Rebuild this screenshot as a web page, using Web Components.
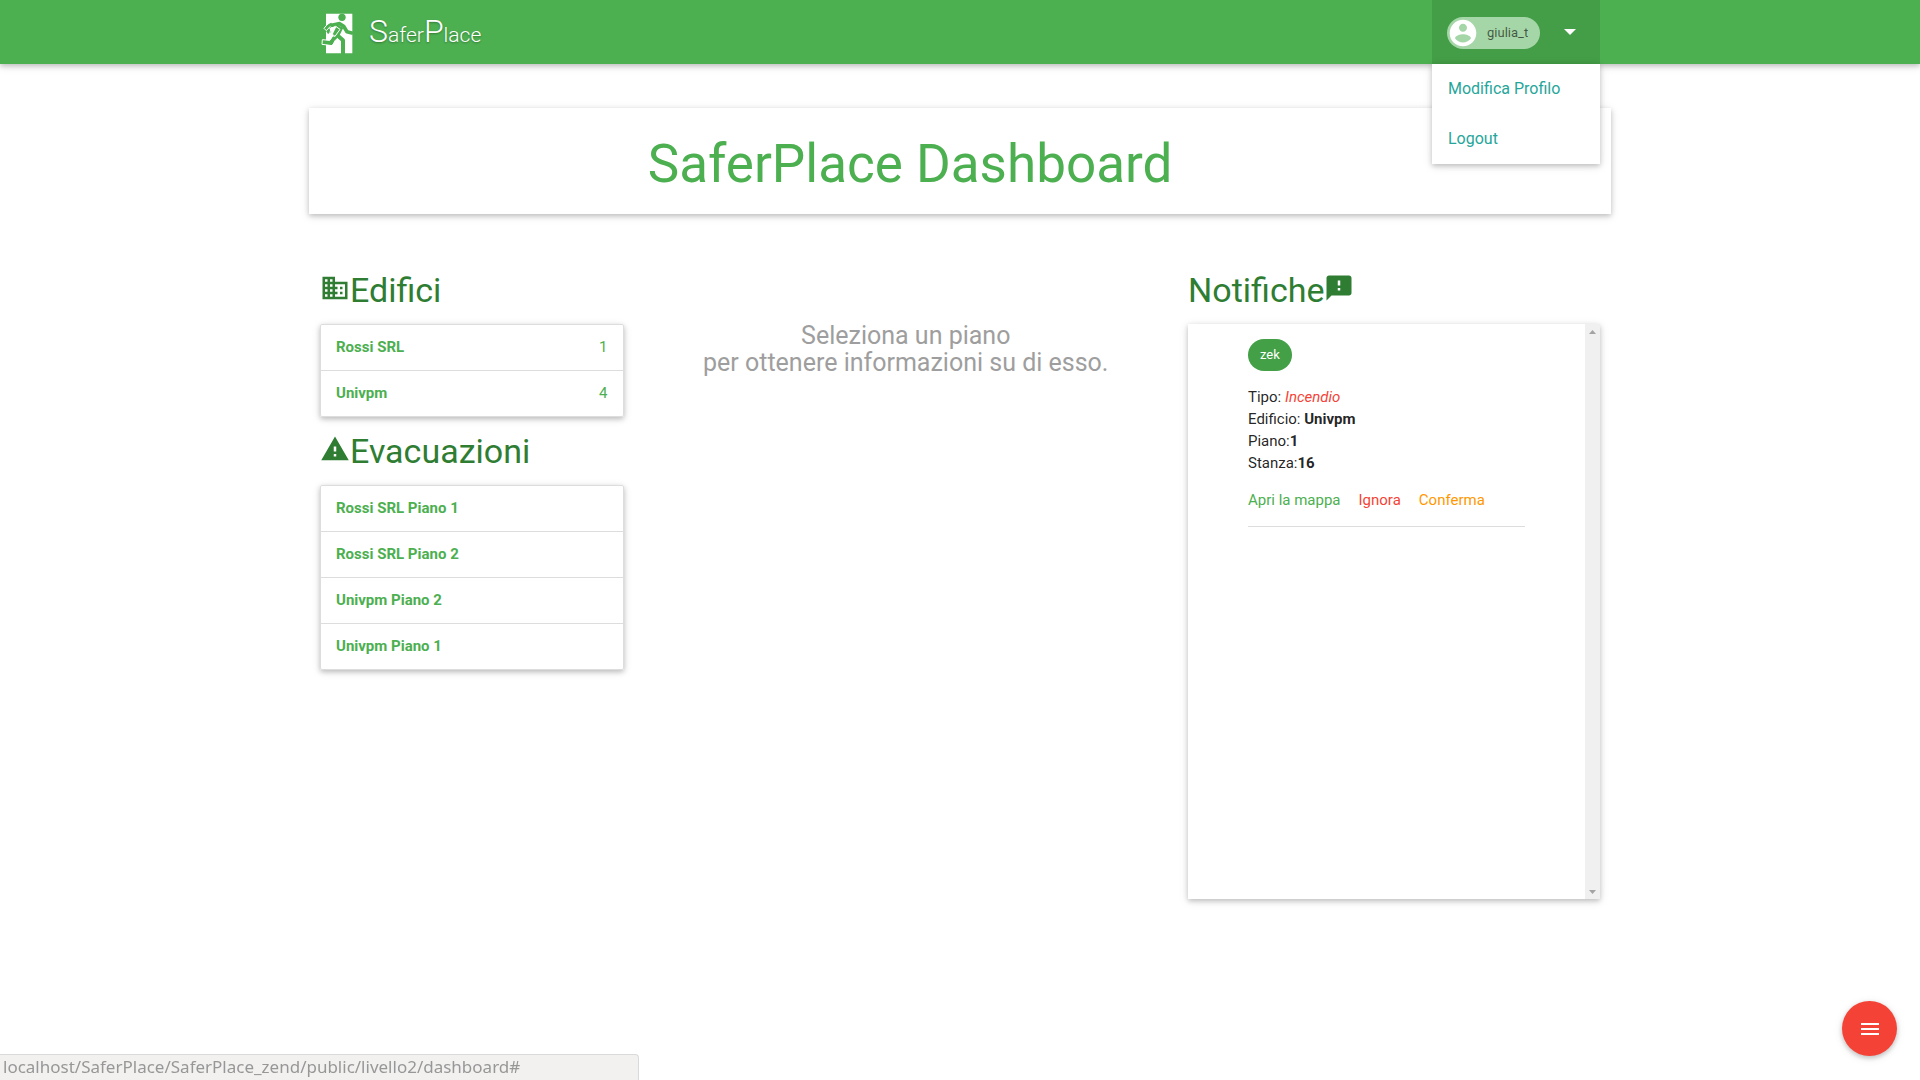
<!DOCTYPE html>
<html lang="it">
<head>
<meta charset="utf-8">
<meta name="viewport" content="width=device-width, initial-scale=1">
<title>SaferPlace Dashboard</title>
<style>
  html, body { margin: 0; }
  body {
    font: 15px/22px Roboto, "Liberation Sans", sans-serif;
    color: rgba(0, 0, 0, .87);
    background: #fff;
    --green: #4caf50;
    --green-dark: #2e7d32;
    --shadow: 0 2px 5px 0 rgba(0,0,0,.2), 0 2px 10px 0 rgba(0,0,0,.1);
    --gutter: 11px;
  }
</style>
</head>
<body>
<sp-app></sp-app>
<script>
const ICONS = {
  business: 'M12 7V3H2v18h20V7H12zM6 19H4v-2h2v2zm0-4H4v-2h2v2zm0-4H4V9h2v2zm0-4H4V5h2v2zm4 12H8v-2h2v2zm0-4H8v-2h2v2zm0-4H8V9h2v2zm0-4H8V5h2v2zm10 12h-8v-2h2v-2h-2v-2h2v-2h-2V9h8v10zm-2-8h-2v2h2v-2zm0 4h-2v2h2v-2z',
  warning: 'M1 21h22L12 2 1 21zm12-3h-2v-2h2v2zm0-4h-2v-4h2v4z',
  feedback: 'M20 2H4c-1.1 0-1.99.9-1.99 2L2 22l4-4h14c1.1 0 2-.9 2-2V4c0-1.1-.9-2-2-2zm-7 12h-2v-2h2v2zm0-4h-2V6h2v4z',
  menu: 'M3 18h18v-2H3v2zm0-5h18v-2H3v2zm0-7v2h18V6H3z',
  account: 'M12 2C6.480 2 2 6.480 2 12s4.480 10 10 10 10-4.480 10-10S17.520 2 12 2zm0 3c1.660 0 3 1.340 3 3s-1.340 3-3 3-3-1.340-3-3 1.340-3 3-3zm0 14.200c-2.500 0-4.710-1.280-6-3.220.030-1.990 4-3.080 6-3.080 1.990 0 5.970 1.090 6 3.080-1.290 1.940-3.500 3.220-6 3.220z',
  caret: 'M6 9l6 6 6-6z'
};

function define(name, html) {
  const template = document.createElement('template');
  template.innerHTML = html;
  customElements.define(name, class extends HTMLElement {
    constructor() {
      super();
      this.attachShadow({ mode: 'open' }).append(template.content.cloneNode(true));
    }
  });
}

customElements.define('sp-icon', class extends HTMLElement {
  connectedCallback() {
    if (this.shadowRoot) return;
    this.attachShadow({ mode: 'open' }).innerHTML = `
      <style>
        :host { display: block; flex: none; width: 24px; height: 24px; }
        svg { display: block; width: 100%; height: 100%; fill: currentColor; }
      </style>
      <svg viewBox="0 0 24 24" aria-hidden="true"><path d="${ICONS[this.getAttribute('name')]}"/></svg>`;
  }
});

define('sp-logo', `
  <style>
    :host { display: block; padding: 2px 0 0 1px; }
    a { display: flex; align-items: flex-end; gap: 16px; color: #fff; text-decoration: none; font-weight: 300; font-size: 21px; line-height: 38px; text-shadow: 0 1px 2px rgba(0,0,0,.3); }
    svg { display: block; width: 32px; height: 41px; }
    .cap { font-size: 32px; }
  </style>
  <a href="#">
    <svg viewBox="64 38 96 123" aria-hidden="true">
      <path fill="#fff" d="M79 40H158V159H79z"/>
      <circle cx="127" cy="51" r="11" fill="#4caf50"/>
      <g fill="none" stroke="#4caf50" stroke-linejoin="round">
        <path stroke-width="11" d="M96 75L120 70L132 78L142 94L160 99"/>
        <path stroke-width="20" d="M122 78L108 106"/>
        <path stroke-width="12" d="M112 104L130 120L130 161"/>
        <path stroke-width="13" d="M108 108L94 128L68 125"/>
        <path stroke-width="12" d="M98 72L80 82L90 98"/>
      </g>
      <g fill="none" stroke="#fff" stroke-width="3" stroke-linejoin="round">
        <path d="M96 67L88 66L73 84L80 91L92 78"/>
        <path d="M94 84L108 78L121 87L106 108L89 104L94 84z"/>
        <path d="M98 108L90 120L68 118L67 132L98 136L108 118"/>
      </g>
    </svg>
    <span><span class="cap">S</span>afer<span class="cap">P</span>lace</span>
  </a>`);

define('sp-user-menu', `
  <style>
    :host { display: block; position: relative; width: 168px; }
    button { box-sizing: border-box; width: 100%; height: 64px; padding: 0 18px 0 15px; border: 0; background: rgba(0,0,0,.1); color: #fff; font: inherit; display: flex; align-items: center; justify-content: space-between; cursor: pointer; }
    .chip { box-sizing: border-box; height: 32px; margin-top: 2px; padding: 0 12px 0 0; border-radius: 16px; background: #a5d6a7; color: rgba(0,0,0,.6); font-size: 13px; line-height: 32px; display: flex; align-items: center; gap: 8px; }
    .chip sp-icon { width: 32px; height: 32px; color: #fff; }
    ul { position: absolute; top: 64px; left: 0; right: 0; z-index: 2; margin: 0; padding: 0; list-style: none; background: #fff; box-shadow: var(--shadow); }
    a { display: block; padding: 14px 16px; font-size: 16px; line-height: 22px; color: #26a69a; text-decoration: none; }
  </style>
  <button type="button" aria-expanded="true"><span class="chip"><sp-icon name="account"></sp-icon>giulia_t</span><sp-icon name="caret"></sp-icon></button>
  <ul><li><a href="#">Modifica Profilo</a></li><li><a href="#">Logout</a></li></ul>`);

define('sp-header', `
  <style>
    :host { display: block; position: relative; z-index: 1; background: var(--green); box-shadow: var(--shadow); }
    nav { display: flex; justify-content: space-between; align-items: center; height: 64px; width: 70%; max-width: 1280px; margin: 0 auto; }
  </style>
  <nav><sp-logo></sp-logo><sp-user-menu></sp-user-menu></nav>`);

define('sp-title', `
  <style>
    :host { display: block; padding: 27px 100px 20px 0; box-shadow: var(--shadow); }
    h1 { margin: 0; font-size: 53px; line-height: 59px; font-weight: 400; text-align: center; color: var(--green); }
  </style>
  <h1><slot></slot></h1>`);

define('sp-heading', `
  <style>
    :host { display: block; padding: 16px 0 15px; }
    h2 { margin: 0; display: flex; align-items: flex-start; font-size: 34px; line-height: 37px; font-weight: 400; color: var(--green-dark); }
    ::slotted(sp-icon) { width: 30px !important; height: 30px !important; margin-top: 1px; }
  </style>
  <h2><slot></slot></h2>`);

define('sp-list', `
  <style>
    :host { display: block; border: 1px solid #ddd; border-radius: 2px; box-shadow: var(--shadow); }
    ::slotted(sp-row:not(:last-child)) { border-bottom: 1px solid #ddd; }
  </style>
  <div><slot></slot></div>`);

define('sp-row', `
  <style>
    :host { display: block; }
    a { display: flex; justify-content: space-between; padding: 10px 15px; line-height: 25px; color: var(--green); text-decoration: none; }
    b { font-weight: 700; }
  </style>
  <a href="#"><b><slot></slot></b><slot name="count"></slot></a>`);

define('sp-notice', `
  <style>
    :host { display: block; border-bottom: 1px solid #ddd; padding-bottom: 15px; }
    .who { display: inline-block; vertical-align: top; padding: 0 12px; border-radius: 16px; background: #43a047; color: #fff; font-size: 13px; line-height: 32px; }
    p { margin: 15px 0; }
    .kind { color: #f44336; }
    .links { display: flex; flex-wrap: wrap; gap: 18px; }
    a { text-decoration: none; color: var(--green); }
    .no { color: #f44336; }
    .yes { color: #ff9800; }
  </style>
  <span class="who">zek</span>
  <p>Tipo: <i class="kind">Incendio</i><br>Edificio: <b>Univpm</b><br>Piano:<b>1</b><br>Stanza:<b>16</b></p>
  <div class="links"><a href="#">Apri la mappa</a><a href="#" class="no">Ignora</a><a href="#" class="yes">Conferma</a></div>`);

define('sp-panel', `
  <style>
    :host { display: flex; height: 575px; box-shadow: var(--shadow); }
    .body { flex: 1; padding: 15px 60px; overflow: hidden; }
    .bar { width: 15px; background: #f0f0f0; display: flex; flex-direction: column; justify-content: space-between; align-items: center; padding: 6px 0 5px; box-sizing: border-box; }
    svg { display: block; width: 7px; height: 4px; fill: #a3a3a3; }
  </style>
  <div class="body"><slot></slot></div>
  <div class="bar" aria-hidden="true"><svg viewBox="0 0 7 4"><path d="M0 4L3.500 0L7 4z"/></svg><svg viewBox="0 0 7 4"><path d="M0 0L3.500 4L7 0z"/></svg></div>`);

define('sp-fab', `
  <style>
    :host { position: fixed; right: 23px; bottom: 24px; z-index: 3; }
    button { width: 55px; height: 55px; border: 0; padding: 0; border-radius: 50%; background: #f44336; color: #fff; display: grid; place-items: center; box-shadow: var(--shadow); cursor: pointer; }
  </style>
  <button type="button" aria-label="Menu"><sp-icon name="menu"></sp-icon></button>`);

define('sp-status', `
  <style>
    :host { position: fixed; left: 0; bottom: 0; z-index: 3; box-sizing: border-box; width: 639px; max-width: 100%; height: 26px; padding-left: 3px; border: 1px solid #dadada; border-width: 1px 1px 0 0; border-radius: 0 4px 0 0; background: #f2f1f0; color: #979797; font: 17px/23px "Noto Sans", sans-serif; white-space: nowrap; overflow: hidden; }
  </style>
  <slot></slot>`);

define('sp-app', `
  <style>
    :host { display: block; min-height: 100vh; }
    main { width: 70%; max-width: 1280px; margin: 44px auto 0; padding-bottom: 40px; }
    sp-title { margin: 0 calc(-1 * var(--gutter)); }
    .grid { display: flex; margin: 42px calc(-1 * var(--gutter)) 0; }
    section { box-sizing: border-box; padding: 0 var(--gutter); min-width: 0; }
    .a { width: 25%; }
    .b { width: 41.6667%; }
    .c { width: 33.3333%; }
    .b p { margin: 66px 0 0; text-align: center; font-size: 25px; line-height: 27px; color: #9e9e9e; }
  </style>
  <sp-header></sp-header>
  <main>
    <sp-title>SaferPlace Dashboard</sp-title>
    <div class="grid">
      <section class="a">
        <sp-heading><sp-icon name="business"></sp-icon>Edifici</sp-heading>
        <sp-list>
          <sp-row>Rossi SRL<span slot="count">1</span></sp-row>
          <sp-row>Univpm<span slot="count">4</span></sp-row>
        </sp-list>
        <sp-heading><sp-icon name="warning"></sp-icon>Evacuazioni</sp-heading>
        <sp-list>
          <sp-row>Rossi SRL Piano 1</sp-row>
          <sp-row>Rossi SRL Piano 2</sp-row>
          <sp-row>Univpm Piano 2</sp-row>
          <sp-row>Univpm Piano 1</sp-row>
        </sp-list>
      </section>
      <section class="b"><p>Seleziona un piano<br>per ottenere informazioni su di esso.</p></section>
      <section class="c">
        <sp-heading>Notifiche<sp-icon name="feedback"></sp-icon></sp-heading>
        <sp-panel><sp-notice></sp-notice></sp-panel>
      </section>
    </div>
  </main>
  <sp-fab></sp-fab>
  <sp-status>localhost/SaferPlace/SaferPlace_zend/public/livello2/dashboard#</sp-status>`);
</script>
</body>
</html>
